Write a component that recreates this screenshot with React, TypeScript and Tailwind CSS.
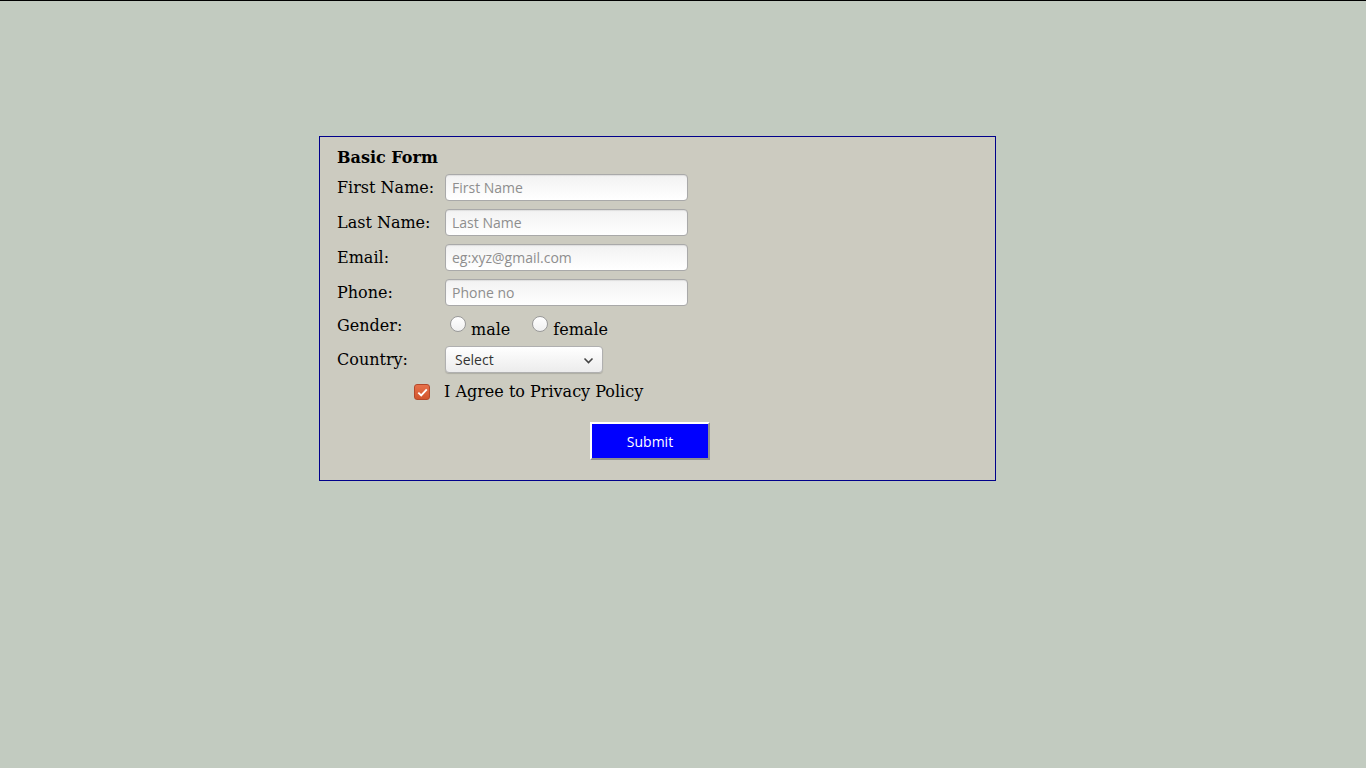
const fields = [
  { label: 'First Name:', placeholder: 'First Name' },
  { label: 'Last Name:', placeholder: 'Last Name' },
  { label: 'Email:', placeholder: 'eg:xyz@gmail.com' },
  { label: 'Phone:', placeholder: 'Phone no' },
];

const serif = "font-['DejaVu_Serif',serif]";
const sans = "font-['Open_Sans',sans-serif]";

function Radio({ label }: { label: string }) {
  return (
    <label className="flex items-start">
      <span className="mt-[1px] w-[16px] h-[16px] rounded-full border border-[#9a9a9a] bg-gradient-to-b from-white to-[#f0f0f0]" />
      <span className={`ml-[5px] mt-[5px] text-[16px] leading-[19px] text-black ${serif}`}>{label}</span>
    </label>
  );
}

export default function App() {
  return (
    <div className="min-h-screen bg-[#c2cbc0] border-t border-black">
      <div className={`ml-[319px] mt-[135px] w-[677px] h-[345px] border border-[#00008b] bg-[#cccbc0] pl-[17px] pt-[11px] ${serif}`}>
        {/* Title */}
        <h1 className="text-[16px] leading-[19px] font-bold text-black">Basic Form</h1>

        <div className="mt-[7px] flex flex-col gap-[8px]">
          {fields.map((f) => (
            <div key={f.label} className="flex items-center h-[27px]">
              <span className="w-[108px] text-[16px] text-black">{f.label}</span>
              <input
                placeholder={f.placeholder}
                className={`w-[243px] h-[27px] rounded-[4px] border border-[#a9a9a9] bg-gradient-to-b from-[#f2f2f2] to-white px-[6px] text-[14px] text-[#333] placeholder:text-[#8e8e8e] shadow-[inset_0_1px_1px_rgba(0,0,0,0.08)] outline-none ${sans}`}
              />
            </div>
          ))}
        </div>

        {/* Gender */}
        <div className="mt-[9px] flex items-start h-[26px]">
          <span className="w-[113px] mt-[1px] text-[16px] leading-[19px] text-black">Gender:</span>
          <div className="flex gap-[22px]">
            <Radio label="male" />
            <Radio label="female" />
          </div>
        </div>

        {/* Country */}
        <div className="mt-[5px] flex items-center h-[27px]">
          <span className="w-[108px] text-[16px] text-black">Country:</span>
          <div className={`relative w-[158px] h-[27px] rounded-[4px] border border-[#b0b0b0] bg-gradient-to-b from-white to-[#ececec] shadow-[0_1px_1px_rgba(0,0,0,0.15)] flex items-center pl-[9px] text-[14px] text-[#333] ${sans}`}>
            Select
            <svg className="absolute right-[8px] top-[10px]" width="11" height="7" viewBox="0 0 11 7">
              <path d="M1.5 1.5 L5.5 5.5 L9.5 1.5" fill="none" stroke="#444" strokeWidth="1.6" />
            </svg>
          </div>
        </div>

        {/* Agree */}
        <div className="mt-[8px] flex items-center h-[22px] pl-[77px]">
          <span className="w-[16px] h-[16px] rounded-[3px] bg-gradient-to-b from-[#e7714a] to-[#d2542c] border border-[#b5482a] flex items-center justify-center">
            <svg width="11" height="9" viewBox="0 0 11 9">
              <path d="M1.3 4.6 L4.2 7.4 L9.8 1.4" fill="none" stroke="white" strokeWidth="1.9" />
            </svg>
          </span>
          <span className="ml-[14px] text-[16px] text-black">I Agree to Privacy Policy</span>
        </div>

        {/* Submit */}
        <div className="mt-[19px] pl-[253px]">
          <button className={`w-[120px] h-[38px] bg-[#0000ff] text-white text-[14px] border-2 border-t-white border-l-white border-b-[#8f8f8f] border-r-[#8f8f8f] ${sans}`}>
            Submit
          </button>
        </div>
      </div>
    </div>
  );
}
